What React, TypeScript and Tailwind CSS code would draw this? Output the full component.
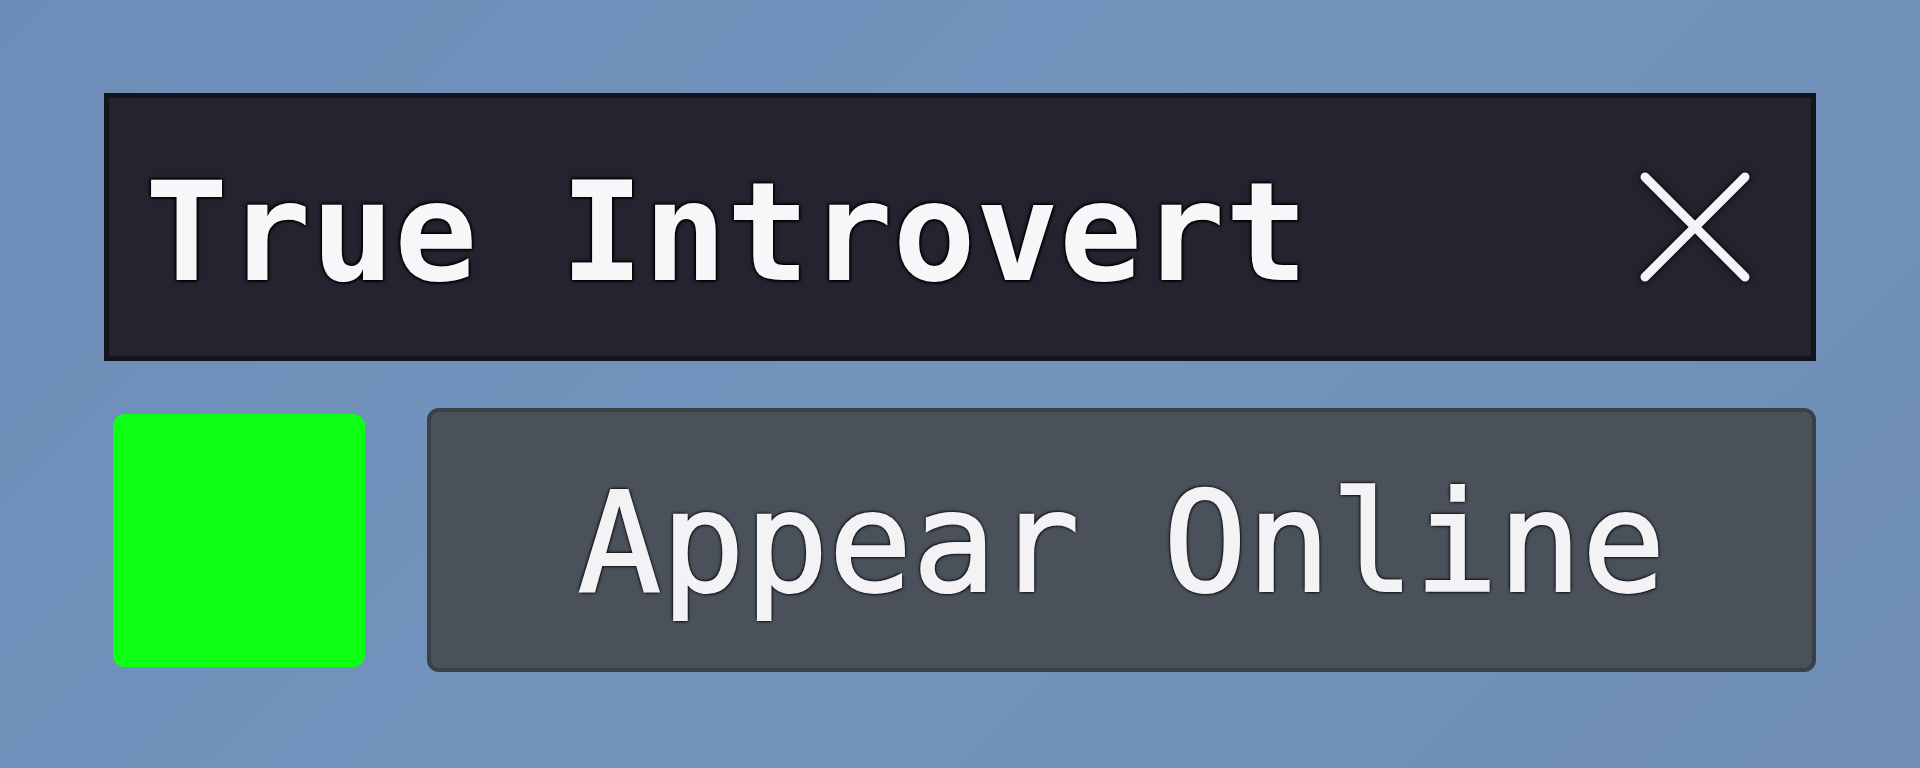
import React from 'react';

const mono = "font-['DejaVu_Sans_Mono','Liberation_Mono',monospace]";
const outline =
  '[text-shadow:0_0_2px_#000,0_0_4px_#000,1px_1px_3px_#000,-1px_-1px_3px_#000]';

const CloseIcon: React.FC = () => (
  <svg
    width="116"
    height="116"
    viewBox="0 0 116 116"
    className="drop-shadow-[0_0_3px_rgba(0,0,0,1)]"
  >
    <path
      d="M8 8 L108 108 M108 8 L8 108"
      stroke="#f4f4f8"
      strokeWidth="9"
      strokeLinecap="round"
      fill="none"
    />
  </svg>
);

const App: React.FC = () => {
  return (
    <div className="w-[1920px] h-[768px] overflow-hidden bg-[linear-gradient(135deg,#6d8db8_0%,#7394bd_50%,#6f8db6_100%)]">
      <div className="flex flex-col gap-[47px] pl-[104px] pt-[93px] w-[1816px]">
        <div className="flex items-center justify-between h-[268px] bg-[#242430] border-[5px] border-[#15141d] pl-[36px] pr-[58px]">
          <span
            className={`${mono} text-[138px] font-bold leading-none text-[#f7f7fa] pt-[12px] ${outline}`}
          >
            True Introvert
          </span>
          <CloseIcon />
        </div>
        <div className="flex items-center gap-[62px]">
          <div className="ml-[9px] w-[252px] h-[253px] shrink-0 rounded-[12px] bg-[#0dff14]" />
          <button className="flex-1 h-[264px] flex items-center justify-center rounded-[12px] bg-[#4a515a] border-[4px] border-[#3b4048]">
            <span
              className={`${mono} text-[139px] leading-none text-[#f3f3f6] pt-[6px] [-webkit-text-stroke:2px_#f3f3f6] ${outline}`}
            >
              Appear Online
            </span>
          </button>
        </div>
      </div>
    </div>
  );
};

export default App;
